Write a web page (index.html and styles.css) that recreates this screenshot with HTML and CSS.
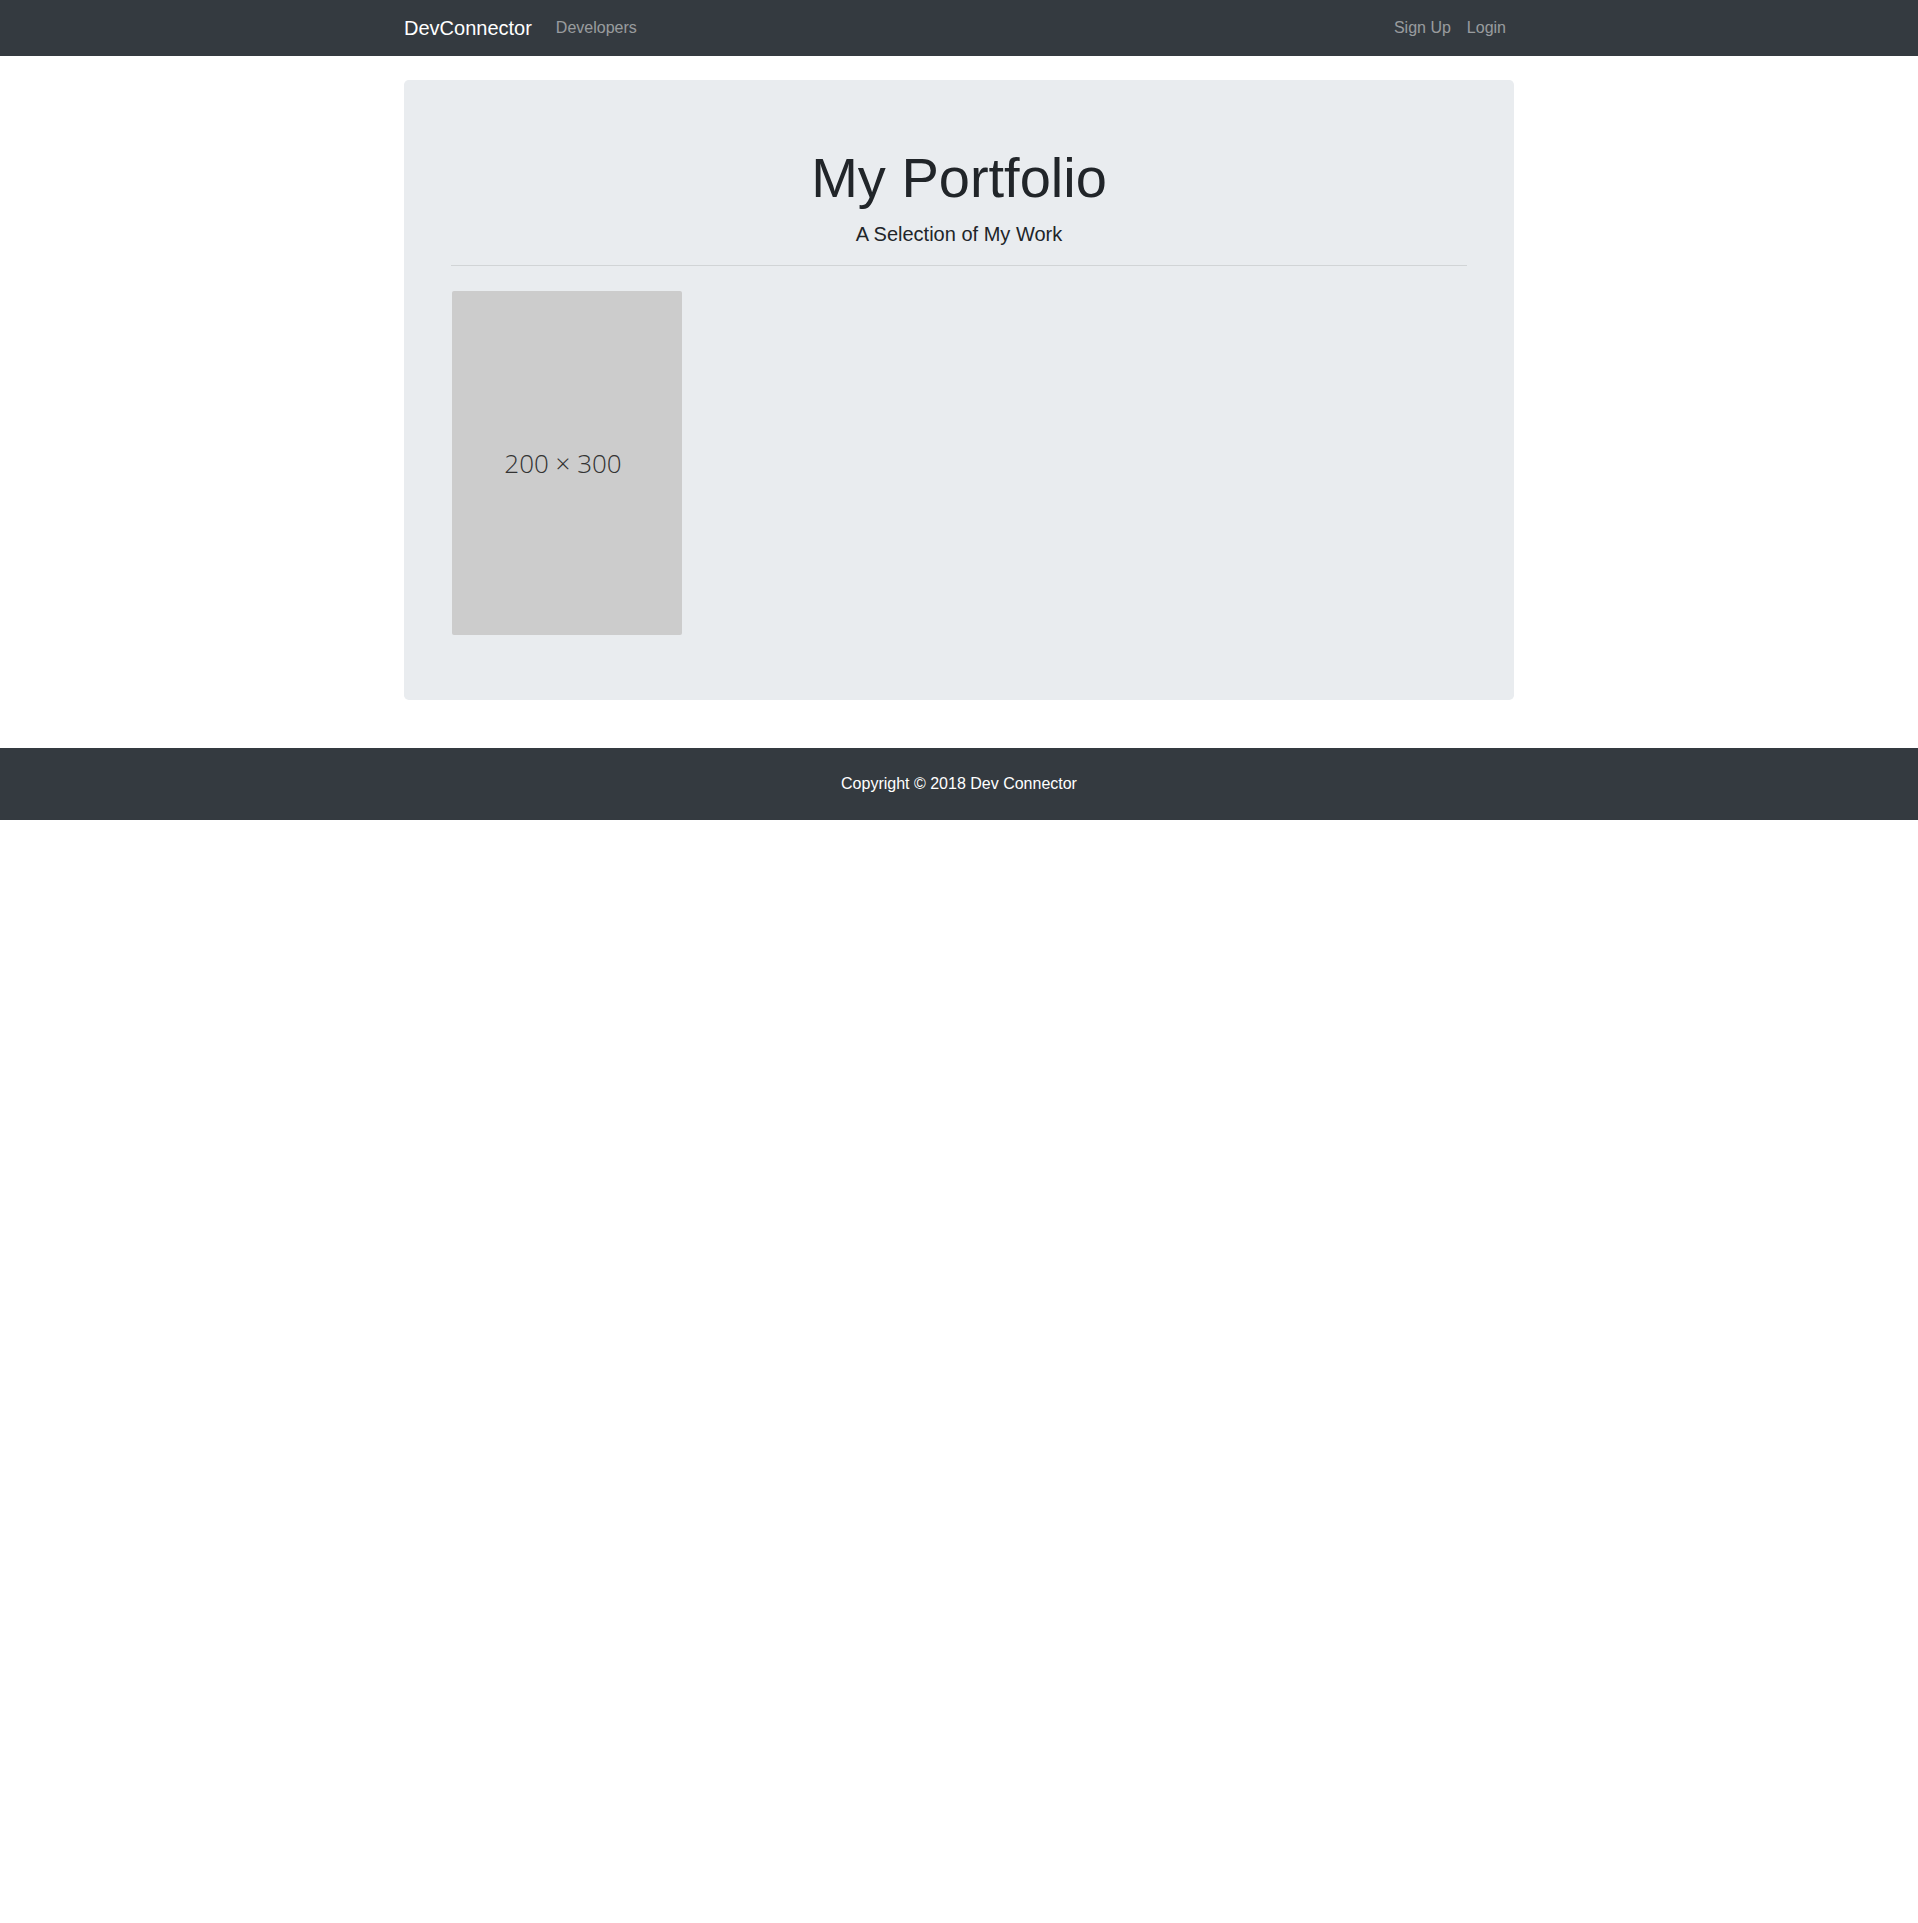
FILE: index.html
```html
<!DOCTYPE html>
<html lang="en">
<head>
<meta charset="utf-8">
<title>DevConnector</title>
<link rel="stylesheet" href="styles.css">
</head>
<body>
<nav class="navbar">
  <div class="nav-container">
    <div class="nav-left">
      <a class="brand" href="#">DevConnector</a>
      <a class="nav-link" href="#">Developers</a>
    </div>
    <div class="nav-right">
      <a class="nav-link" href="#">Sign Up</a>
      <a class="nav-link" href="#">Login</a>
    </div>
  </div>
</nav>
<main class="container">
  <section class="jumbotron">
    <div class="inner">
      <h1 class="title">My Portfolio</h1>
      <p class="lead">A Selection of My Work</p>
      <hr class="divider">
      <div class="gallery">
        <div class="placeholder">200 × 300</div>
      </div>
    </div>
  </section>
</main>
<footer class="footer">Copyright © 2018 Dev Connector</footer>
</body>
</html>
```
FILE: styles.css
```css
* { box-sizing: border-box; }
html, body { margin: 0; padding: 0; }
body {
  font-family: "Liberation Sans", Arial, sans-serif;
  font-size: 16px;
  line-height: 1.5;
  color: #212529;
  background: #fff;
}
a { text-decoration: none; }

.navbar {
  background: #343a40;
  padding: 8px 16px;
  height: 56px;
}
.nav-container {
  width: 1140px;
  margin: 0 auto;
  padding: 0 15px;
  display: flex;
  justify-content: space-between;
  align-items: center;
}
.nav-left, .nav-right { display: flex; align-items: center; }
.brand {
  color: #fff;
  font-size: 20px;
  line-height: 30px;
  padding: 5px 0;
  margin-right: 16px;
}
.nav-link {
  color: rgba(255,255,255,.5);
  padding: 8px;
  line-height: 24px;
}

.container {
  width: 1140px;
  margin: 24px auto 0;
  padding: 0 15px;
}
.jumbotron {
  background: #e9ecef;
  border-radius: 4.8px;
  padding: 64px 32px 65px;
  margin-bottom: 48px;
}
.inner { padding: 0 15px; }
.title {
  font-size: 56px;
  font-weight: 400;
  line-height: 1.2;
  margin: 0 0 8px;
  text-align: center;
}
.lead {
  font-size: 20px;
  line-height: 30px;
  margin: 0 0 16px;
  text-align: center;
}
.divider {
  border: 0;
  border-top: 1px solid rgba(0,0,0,.1);
  margin: 16px 0 25px;
}
.gallery { display: flex; padding-left: 1px; }
.placeholder {
  width: 230px;
  height: 344px;
  background: #cccccc;
  border-radius: 2px;
  display: flex;
  align-items: center;
  justify-content: center;
  font-family: "Open Sans", sans-serif;
  font-size: 26px;
  font-weight: 300;
  color: #333;
  padding-right: 8px;
}

.footer {
  background: #343a40;
  color: #fff;
  text-align: center;
  padding: 24px;
  line-height: 24px;
}
```
